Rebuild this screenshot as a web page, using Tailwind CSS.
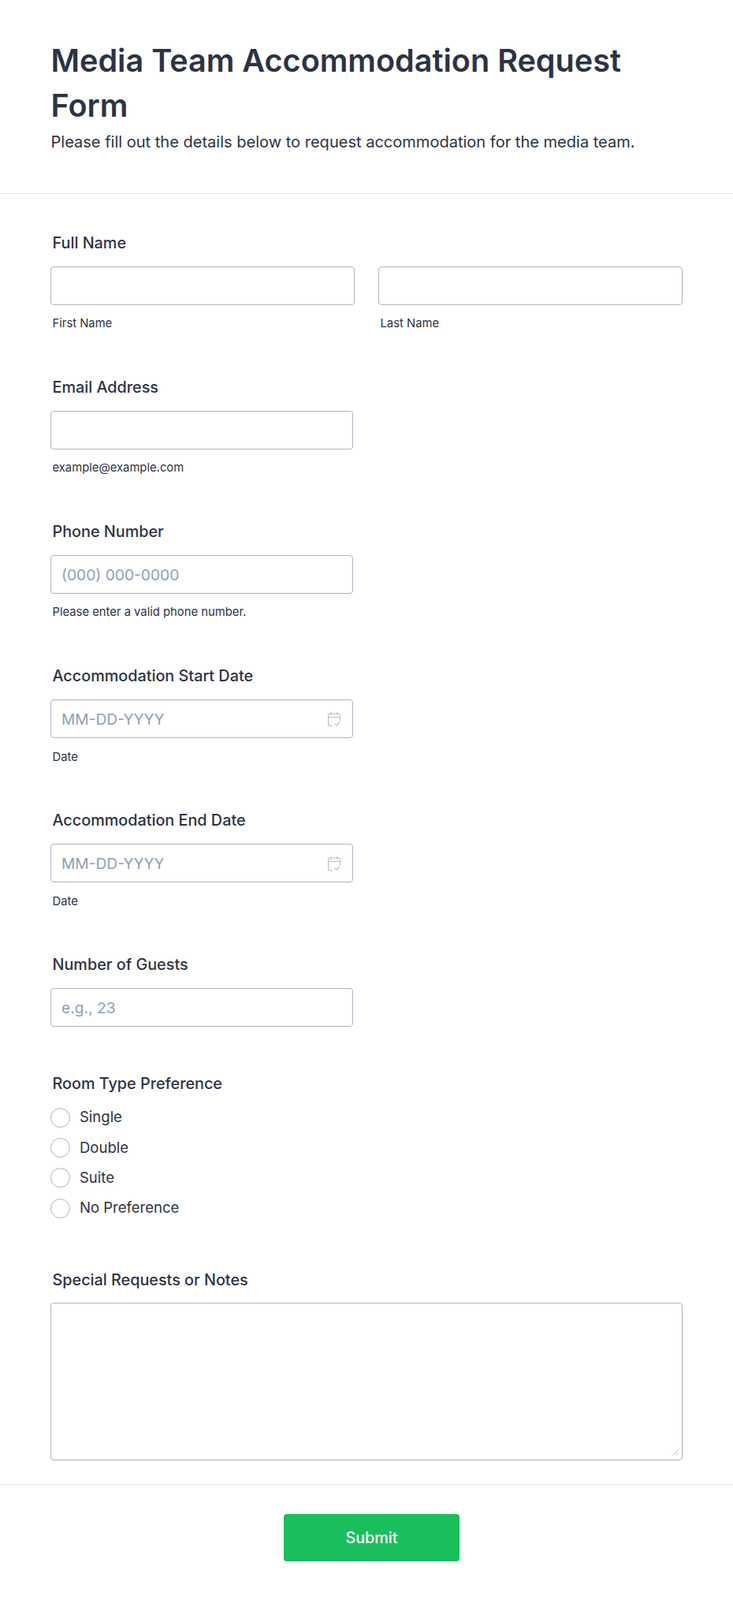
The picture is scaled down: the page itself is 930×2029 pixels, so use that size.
<!DOCTYPE html>
<html lang="en">
<head>
    <meta charset="UTF-8">
    <meta name="viewport" content="width=device-width, initial-scale=1.0">
    <title>Media Team Accommodation Request Form</title>
    <script src="https://cdn.jsdelivr.net/npm/@tailwindcss/browser@4"></script>
</head>
<body class="bg-white font-['Inter',sans-serif] text-[#2c3345]">
    <!-- Header -->
    <div class="h-[246px] border-b border-[#dfe1e8] px-[64.5px] pt-[49px]">
        <h1 class="text-[39.6px] leading-[57px] font-semibold">Media Team Accommodation Request Form</h1>
        <p class="mt-[2px] text-[20.05px] leading-[30px]">Please fill out the details below to request accommodation for the media team.</p>
    </div>

    <form class="px-16 pt-[47px]">
        <!-- Full name -->
        <div class="mb-14">
            <label class="block pl-[2.5px] mb-[15px] text-[19.8px] leading-[30px] font-medium">Full Name</label>
            <div class="flex w-[802px] gap-[30px]">
                <div class="flex-1">
                    <input type="text" class="w-full h-[49px] px-[13px] border border-[#aeb3c3] rounded text-[19.2px] bg-white">
                    <div class="mt-[13px] pl-[2.5px] text-[14.8px] leading-5">First Name</div>
                </div>
                <div class="flex-1">
                    <input type="text" class="w-full h-[49px] px-[13px] border border-[#aeb3c3] rounded text-[19.2px] bg-white">
                    <div class="mt-[13px] pl-[2.5px] text-[14.8px] leading-5">Last Name</div>
                </div>
            </div>
        </div>

        <!-- Email -->
        <div class="mb-14">
            <label class="block pl-[2.5px] mb-[15px] text-[19.8px] leading-[30px] font-medium">Email Address</label>
            <input type="email" class="block w-[384px] h-[49px] px-[13px] border border-[#aeb3c3] rounded text-[19.2px] bg-white">
            <div class="mt-[13px] pl-[2.5px] text-[14.8px] leading-5">example@example.com</div>
        </div>

        <!-- Phone -->
        <div class="mb-14">
            <label class="block pl-[2.5px] mb-[15px] text-[19.8px] leading-[30px] font-medium">Phone Number</label>
            <input type="tel" placeholder="(000) 000-0000" class="block w-[384px] h-[49px] px-[13px] border border-[#aeb3c3] rounded text-[19.2px] bg-white placeholder:text-[#8d9fb8]">
            <div class="mt-[13px] pl-[2.5px] text-[14.8px] leading-5">Please enter a valid phone number.</div>
        </div>

        <!-- Start date -->
        <div class="mb-[55px]">
            <label class="block pl-[2.5px] mb-[15px] text-[19.8px] leading-[30px] font-medium">Accommodation Start Date</label>
            <div class="relative w-[384px]">
                <input type="text" placeholder="MM-DD-YYYY" class="block w-full h-[49px] px-[13px] border border-[#aeb3c3] rounded text-[19.2px] bg-white placeholder:text-[#8d9fb8]">
                <svg class="absolute right-[16px] top-[16px] w-4 h-[18px]" viewBox="0 0 16 18" fill="none" stroke="#b8bdc9" stroke-width="1.1" stroke-linecap="round" stroke-linejoin="round">
                    <path d="M5.5 17.5h-3a2 2 0 0 1-2-2V4a2 2 0 0 1 2-2h11a2 2 0 0 1 2 2v7"/>
                    <path d="M.5 6.5h15M4 .5v3M12 .5v3"/>
                    <path d="M9 15l2 2 4-4"/>
                </svg>
            </div>
            <div class="mt-[14px] pl-[2.5px] text-[14.8px] leading-5">Date</div>
        </div>

        <!-- End date -->
        <div class="mb-[55px]">
            <label class="block pl-[2.5px] mb-[15px] text-[19.8px] leading-[30px] font-medium">Accommodation End Date</label>
            <div class="relative w-[384px]">
                <input type="text" placeholder="MM-DD-YYYY" class="block w-full h-[49px] px-[13px] border border-[#aeb3c3] rounded text-[19.2px] bg-white placeholder:text-[#8d9fb8]">
                <svg class="absolute right-[16px] top-[16px] w-4 h-[18px]" viewBox="0 0 16 18" fill="none" stroke="#b8bdc9" stroke-width="1.1" stroke-linecap="round" stroke-linejoin="round">
                    <path d="M5.5 17.5h-3a2 2 0 0 1-2-2V4a2 2 0 0 1 2-2h11a2 2 0 0 1 2 2v7"/>
                    <path d="M.5 6.5h15M4 .5v3M12 .5v3"/>
                    <path d="M9 15l2 2 4-4"/>
                </svg>
            </div>
            <div class="mt-[14px] pl-[2.5px] text-[14.8px] leading-5">Date</div>
        </div>

        <!-- Guests -->
        <div class="mb-[57px]">
            <label class="block pl-[2.5px] mb-[15px] text-[19.8px] leading-[30px] font-medium">Number of Guests</label>
            <input type="text" placeholder="e.g., 23" class="block w-[384px] h-[49px] px-[13px] border border-[#aeb3c3] rounded text-[19.2px] bg-white placeholder:text-[#8d9fb8]">
        </div>

        <!-- Room type -->
        <div class="mb-[57px]">
            <label class="block pl-[2.5px] mb-[9px] text-[19.8px] leading-[30px] font-medium">Room Type Preference</label>
            <div class="flex items-center h-[38.33px] gap-[12px] text-[18.5px]"><input type="radio" name="room" class="appearance-none w-[25px] h-[25px] rounded-full border border-[#aeb3c3]"><span>Single</span></div>
            <div class="flex items-center h-[38.33px] gap-[12px] text-[18.5px]"><input type="radio" name="room" class="appearance-none w-[25px] h-[25px] rounded-full border border-[#aeb3c3]"><span>Double</span></div>
            <div class="flex items-center h-[38.33px] gap-[12px] text-[18.5px]"><input type="radio" name="room" class="appearance-none w-[25px] h-[25px] rounded-full border border-[#aeb3c3]"><span>Suite</span></div>
            <div class="flex items-center h-[38.33px] gap-[12px] text-[18.5px]"><input type="radio" name="room" class="appearance-none w-[25px] h-[25px] rounded-full border border-[#aeb3c3]"><span>No Preference</span></div>
        </div>

        <!-- Notes -->
        <div>
            <label class="block pl-[2.5px] mb-[14px] text-[19.8px] leading-[30px] font-medium">Special Requests or Notes</label>
            <div class="relative w-[802px]">
                <textarea class="block w-full h-[200px] p-3 border border-[#aeb3c3] rounded text-xl bg-white resize-none"></textarea>
                <svg class="absolute right-[5px] bottom-[6px] w-2 h-2" viewBox="0 0 8 8" fill="none" stroke="#b8bdc9" stroke-width="1">
                    <path d="M.5 7.5l7-7M4.5 7.5l3-3"/>
                </svg>
            </div>
        </div>
    </form>

    <!-- Footer -->
    <div class="mt-[30px] flex justify-center border-t border-[#dfe1e8] pt-[37px] pb-[49px] pl-[13px]">
        <button type="button" class="w-[223px] h-[60px] pt-0.5 rounded bg-[#1bbe5d] text-[19.8px] font-medium text-white">Submit</button>
    </div>
</body>
</html>
